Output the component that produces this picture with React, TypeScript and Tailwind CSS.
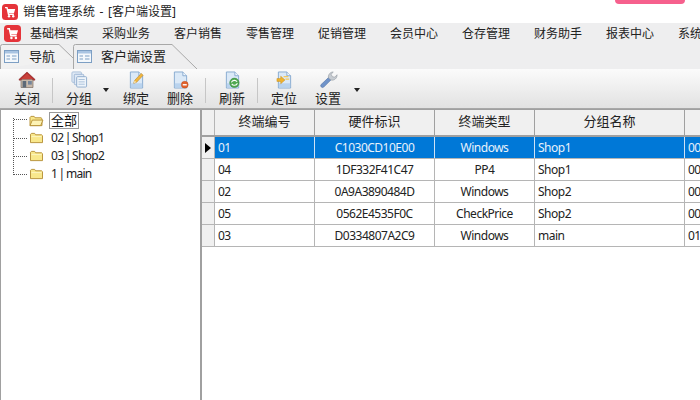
import * as React from "react";

// ─── Icons ────────────────────────────────────────────────────────────────────

function AppLogo({ size = 16 }: { size?: number }) {
  return (
    <svg width={size} height={size} viewBox="0 0 16 16" className="shrink-0">
      <rect x="0" y="0" width="16" height="16" rx="3.5" fill="#e5343a" />
      <path d="M3 3.6h2l1.5 6.6h5.4" fill="none" stroke="#fff" strokeWidth="1.4" />
      <path d="M5.4 5h7.8l-1.2 4H6.3z" fill="#fff" />
      <circle cx="7" cy="12.2" r="1.2" fill="#fff" />
      <circle cx="11.2" cy="12.2" r="1.2" fill="#fff" />
    </svg>
  );
}

function TabIcon() {
  return (
    <svg width="15" height="13" viewBox="0 0 15 13" className="shrink-0">
      <rect x="0.5" y="0.5" width="14" height="12" fill="#f4f8fc" stroke="#7d9fc4" />
      <rect x="1" y="1" width="13" height="2.5" fill="#a9c4e2" />
      <path d="M2.5 6h3.5M2.5 9h3.5M8 6h4.5M8 9h4.5" stroke="#7d9fc4" />
    </svg>
  );
}

function FolderIcon({ open }: { open?: boolean }) {
  return (
    <svg width={open ? 16 : 15} height="12" viewBox="0 0 16 13" className="shrink-0">
      <path d="M1.5 11.5V2.5l1-1h3.5l1 1.5h6.5l1 1v7.5z" fill="#f9e88c" stroke="#b58f35" strokeLinejoin="round" />
      {open ? (
        <path d="M1.5 11.5l2.5-6h11.5l-2.5 6z" fill="#fdf3b5" stroke="#b58f35" strokeLinejoin="round" />
      ) : (
        <path d="M2.5 5h11" stroke="#fdf6c8" />
      )}
    </svg>
  );
}

function HomeIcon() {
  return (
    <svg width="18" height="18" viewBox="0 0 18 18">
      <path d="M3 8.5h12v8H3z" fill="#c7b9ab" stroke="#6c5a50" strokeWidth="0.6" />
      <path d="M9 1L0.8 8.6l1.2 1L9 3.4l7 6.2 1.2-1z" fill="#b32d2d" stroke="#7c1f1f" strokeWidth="0.5" />
      <path d="M9 2.6L2.8 8.2h12.4z" fill="#c8413b" />
      <rect x="4.6" y="10" width="3.6" height="6.5" fill="#5d6a78" />
      <rect x="10" y="10" width="3.8" height="3.6" fill="#74859a" />
    </svg>
  );
}

function GroupIcon() {
  return (
    <svg width="17" height="17" viewBox="0 0 18 18">
      <rect x="1" y="1" width="10" height="11" rx="1" fill="#dfe9f5" stroke="#a9c0da" />
      <rect x="3.5" y="3.5" width="10" height="11" rx="1" fill="#dfe9f5" stroke="#9db6d3" />
      <rect x="6" y="6" width="10.5" height="11" rx="1" fill="#eef4fa" stroke="#8faccd" />
      <path d="M8 9h6.5M8 11.5h6.5M8 14h6.5" stroke="#a9c0da" />
    </svg>
  );
}

function DocBase({ children }: { children?: React.ReactNode }) {
  return (
    <svg width="17" height="18" viewBox="0 0 18 19">
      <path d="M2.5 1h9l4 4v13h-13z" fill="#dbe9f7" stroke="#86a9cf" />
      <path d="M11.5 1v4h4" fill="#f2f7fc" stroke="#86a9cf" />
      <path d="M3 13h12v4.5H3z" fill="#b9d3ee" />
      {children}
    </svg>
  );
}

function BindIcon() {
  return (
    <DocBase>
      <path d="M6 13l1-3 7-7.5 2 2L9 12z" fill="#f1b63d" stroke="#b97f1c" strokeWidth="0.6" />
      <path d="M6 13l1-3 2 2z" fill="#f7e2b0" />
    </DocBase>
  );
}

function DeleteIcon() {
  return (
    <DocBase>
      <circle cx="13.5" cy="14.5" r="3.6" fill="#e2622d" stroke="#b9481c" strokeWidth="0.5" />
      <rect x="11.4" y="13.8" width="4.2" height="1.5" fill="#fff" />
    </DocBase>
  );
}

function RefreshIcon() {
  return (
    <DocBase>
      <circle cx="11" cy="12.5" r="5" fill="#4fa84f" stroke="#2f7f36" strokeWidth="0.5" />
      <path d="M7.8 12c1-2.6 4.6-2.8 6 -.6M14.2 13c-1 2.6-4.6 2.8-6 .6" fill="none" stroke="#fff" strokeWidth="1.1" />
    </DocBase>
  );
}

function LocateIcon() {
  return (
    <DocBase>
      <path d="M1 8h4V5.5l4.5 4-4.5 4V11H1z" fill="#f0b32f" stroke="#c48a1a" strokeWidth="0.5" />
      <path d="M8 6h5M10 8.5h4" stroke="#f5c95a" strokeWidth="1.4" />
    </DocBase>
  );
}

function WrenchIcon() {
  return (
    <svg width="19" height="19" viewBox="0 0 20 20">
      <path d="M2 15.5l8-7.5 2.5 2.5-7.5 7.5a2 2 0 0 1-3-2.5z" fill="#6f93c9" stroke="#4e6fa3" strokeWidth="0.6" />
      <path d="M10 8.5c-.8-3 1.4-6.4 5-6.5l-2.2 2.6 1.3 2.5 2.7.4L19 5c.3 3.6-3 6.4-6.4 5.6z" fill="#c7ccd2" stroke="#8d949c" strokeWidth="0.6" />
    </svg>
  );
}

// ─── Toolbar ──────────────────────────────────────────────────────────────────

function ToolButton({ icon, label, className }: { icon: React.ReactNode; label: string; className: string }) {
  return (
    <div className={`flex shrink-0 flex-col items-center pt-[1px] ${className}`}>
      <div className="flex h-[19px] items-center justify-center">{icon}</div>
      <span className="mt-[1px] text-[13px] leading-[16px] text-[#222]">{label}</span>
    </div>
  );
}

function Separator({ className }: { className: string }) {
  return <div className={`mt-[9px] h-[25px] w-px shrink-0 bg-[#c6c6c6] ${className}`} />;
}

function Caret({ className }: { className: string }) {
  return <div className={`mt-[19px] h-0 w-0 shrink-0 border-x-[3.5px] border-t-[4px] border-x-transparent border-t-[#222] ${className}`} />;
}

// ─── Data ─────────────────────────────────────────────────────────────────────

const MENUS = ["基础档案", "采购业务", "客户销售", "零售管理", "促销管理", "会员中心", "仓存管理", "财务助手", "报表中心", "系统"];

const ROWS = [
  { no: "01", hw: "C1030CD10E00", type: "Windows", group: "Shop1", extra: "00" },
  { no: "04", hw: "1DF332F41C47", type: "PP4", group: "Shop1", extra: "00" },
  { no: "02", hw: "0A9A3890484D", type: "Windows", group: "Shop2", extra: "00" },
  { no: "05", hw: "0562E4535F0C", type: "CheckPrice", group: "Shop2", extra: "00" },
  { no: "03", hw: "D0334807A2C9", type: "Windows", group: "main", extra: "01" },
];

const TREE = ["02 | Shop1", "03 | Shop2", "1 | main"];

const HEADERS = [
  { label: "终端编号", w: "w-[100px]" },
  { label: "硬件标识", w: "w-[120px]" },
  { label: "终端类型", w: "w-[100px]" },
  { label: "分组名称", w: "w-[150px]" },
  { label: "", w: "w-[60px]" },
];

const FONT = "font-['Noto_Sans','Noto_Sans_CJK_SC',sans-serif]";

// ─── App ──────────────────────────────────────────────────────────────────────

export default function App() {
  return (
    <div className={`flex h-[400px] w-[700px] flex-col overflow-hidden bg-white ${FONT}`}>
      {/* Title bar */}
      <div className="relative flex h-[23px] shrink-0 items-center gap-[5px] pl-[2px]">
        <AppLogo />
        <span className="text-[12px] leading-none text-[#222] [word-spacing:1.5px]">销售管理系统 - [客户端设置]</span>
        <div className="absolute right-[15px] top-0 h-[4px] w-[70px] rounded-b-[5px] bg-[#f6608d]" />
      </div>

      {/* Menu bar */}
      <div className="flex h-[21px] shrink-0 items-center overflow-hidden bg-[#eeeeef] pl-[4px]">
        <AppLogo size={17} />
        <div className="ml-[9px] flex">
          {MENUS.map((m) => (
            <span key={m} className="w-[72px] shrink-0 text-[12px] leading-[18px] text-[#222]">{m}</span>
          ))}
        </div>
      </div>

      {/* Tab strip */}
      <div className="relative flex h-[25px] shrink-0 items-end bg-[#eeeeef]">
        <div className="relative flex h-[24px] w-[73px] items-center gap-[10px] pb-[2px] pl-[4px]">
          <svg width="73" height="26" viewBox="0 0 73 26" className="absolute left-0 top-[-2px]">
            <path d="M0.5 26V3.5q0-2 2-2H59L73 15" fill="#f1f1f1" stroke="#a8a8a8" />
          </svg>
          <span className="relative"><TabIcon /></span>
          <span className="relative text-[13px] leading-none text-[#222]">导航</span>
        </div>
        <div className="relative flex h-[24px] w-[124px] items-center gap-[9px] pb-[2px] pl-[4px]">
          <svg width="124" height="26" viewBox="0 0 124 26" className="absolute left-0 top-[-2px]">
            <path d="M0.5 26V3.5q0-2 2-2H99L124 26" fill="#eeeeef" stroke="#a8a8a8" />
          </svg>
          <span className="relative"><TabIcon /></span>
          <span className="relative text-[13px] leading-none text-[#222]">客户端设置</span>
        </div>
      </div>

      {/* Toolbar */}
      <div className="flex h-[40px] shrink-0 items-start border-b border-[#a8a8a8] bg-gradient-to-b from-[#fbfbfb] to-[#e2e2e2] pl-[8px]">
        <ToolButton icon={<HomeIcon />} label="关闭" className="w-[38px]" />
        <Separator className="ml-[6px]" />
        <ToolButton icon={<GroupIcon />} label="分组" className="ml-[12px] w-[28px]" />
        <Caret className="ml-[10px]" />
        <ToolButton icon={<BindIcon />} label="绑定" className="ml-[13px] w-[28px]" />
        <ToolButton icon={<DeleteIcon />} label="删除" className="ml-[16px] w-[28px]" />
        <Separator className="ml-[11px]" />
        <ToolButton icon={<RefreshIcon />} label="刷新" className="ml-[12px] w-[28px]" />
        <Separator className="ml-[11px]" />
        <ToolButton icon={<LocateIcon />} label="定位" className="ml-[12px] w-[28px]" />
        <ToolButton icon={<WrenchIcon />} label="设置" className="ml-[16px] w-[28px]" />
        <Caret className="ml-[12px]" />
      </div>

      {/* Body */}
      <div className="flex min-h-0 flex-1">
        {/* Tree */}
        <div className="relative h-full w-[202px] shrink-0 border-l border-r-2 border-t border-[#a0a0a0] pl-[11px] pt-[1px]">
          <div className="absolute left-[12px] top-[8px] h-[57px] w-px border-l border-dotted border-[#555]" />
          <div className="relative flex h-[18px] items-center pl-[16px] pt-[1px]">
            <div className="absolute left-[2px] top-[8px] w-[13px] border-t border-dotted border-[#555]" />
            <FolderIcon open />
            <span className="ml-[5px] border border-[#999] px-[1px] text-[13px] leading-[15px] text-[#111]">全部</span>
          </div>
          {TREE.map((t) => (
            <div key={t} className="relative flex h-[18px] items-center pl-[17px]">
              <div className="absolute left-[2px] top-[9px] w-[13px] border-t border-dotted border-[#555]" />
              <FolderIcon />
              <span className="ml-[7px] text-[12px] leading-none tracking-[-0.7px] text-[#222] [word-spacing:-1px]">{t}</span>
            </div>
          ))}
        </div>

        {/* Grid */}
        <div className="min-w-0 flex-1 overflow-hidden border-t border-[#a0a0a0]">
          <div className="flex h-[27px] border-b-2 border-[#a0a0a0] bg-[#f0f0f0]">
            <div className="w-[13px] shrink-0 border-r border-[#b5b5b5]" />
            {HEADERS.map((h, i) => (
              <div key={i} className={`flex shrink-0 items-center justify-center border-r border-[#a0a0a0] pb-[2px] text-[13px] text-[#222] ${h.w}`}>
                {h.label}
              </div>
            ))}
          </div>
          {ROWS.map((r, i) => {
            const sel = i === 0;
            const cell = `flex shrink-0 items-center border-r text-[12px] tracking-[-0.5px] ${sel ? "border-[#cfe2f5] bg-[#0078d7] text-[#e8f2fb]" : "border-[#b5b5b5] text-[#222]"}`;
            return (
              <div key={r.no} className="flex h-[22px] border-b border-[#b5b5b5]">
                <div className="flex w-[13px] shrink-0 items-center justify-center border-r border-[#b5b5b5] bg-[#f0f0f0]">
                  {sel && <div className="h-0 w-0 border-y-[5.5px] border-l-[6px] border-y-transparent border-l-black" />}
                </div>
                <div className={`${cell} w-[100px] pl-[3px]`}>{r.no}</div>
                <div className={`${cell} w-[120px] justify-center`}>{r.hw}</div>
                <div className={`${cell} w-[100px] justify-center`}>{r.type}</div>
                <div className={`${cell} w-[150px] pl-[3px]`}>{r.group}</div>
                <div className={`${cell} w-[60px] pl-[3px]`}>{r.extra}</div>
              </div>
            );
          })}
        </div>
      </div>
    </div>
  );
}
